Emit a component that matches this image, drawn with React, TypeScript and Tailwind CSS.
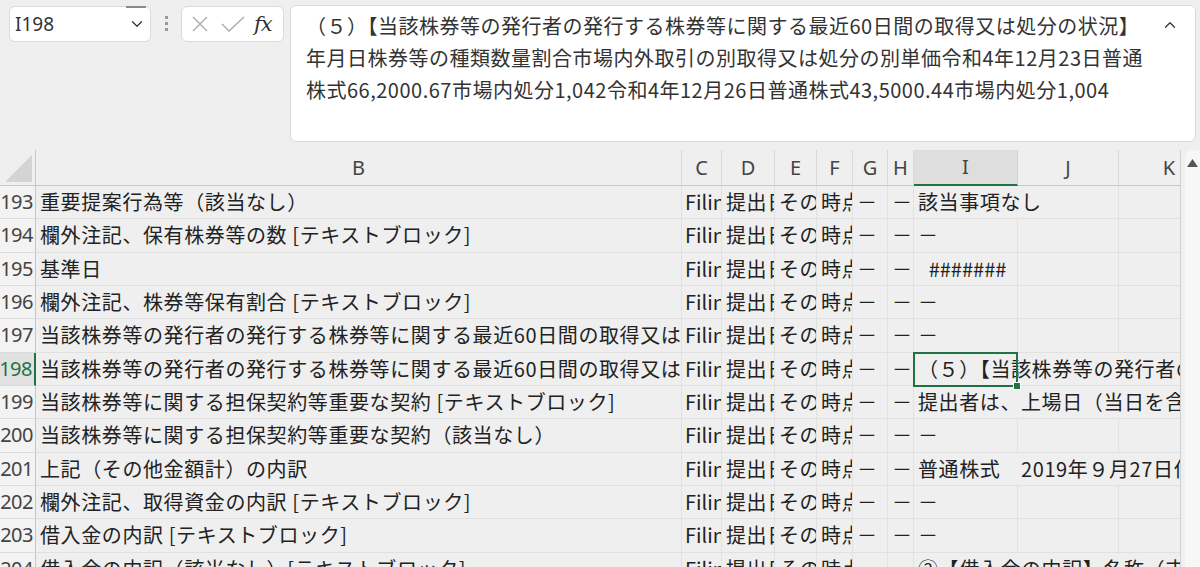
import { ChevronDown, ChevronUp } from 'lucide-react';

type Row = {
  n: number;
  b: string;
  i: string;
  span?: 1 | 2 | 3;
  hash?: boolean;
  selected?: boolean;
};

const rows: Row[] = [
  { n: 193, b: '重要提案行為等（該当なし）', i: '該当事項なし', span: 2 },
  { n: 194, b: '欄外注記、保有株券等の数 [テキストブロック]', i: '－' },
  { n: 195, b: '基準日', i: '#######', hash: true },
  { n: 196, b: '欄外注記、株券等保有割合 [テキストブロック]', i: '－' },
  { n: 197, b: '当該株券等の発行者の発行する株券等に関する最近60日間の取得又は処分の状況 [テキストブロック]', i: '－' },
  {
    n: 198,
    b: '当該株券等の発行者の発行する株券等に関する最近60日間の取得又は処分の状況（該当なし）',
    i: '（５）【当該株券等の発行者の発行する株券等に関する最近60日間の取得又は処分の状況】',
    span: 3,
    selected: true,
  },
  { n: 199, b: '当該株券等に関する担保契約等重要な契約 [テキストブロック]', i: '提出者は、上場日（当日を含む。）から', span: 3 },
  { n: 200, b: '当該株券等に関する担保契約等重要な契約（該当なし）', i: '－' },
  { n: 201, b: '上記（その他金額計）の内訳', i: '普通株式　2019年９月27日付で', span: 3 },
  { n: 202, b: '欄外注記、取得資金の内訳 [テキストブロック]', i: '－' },
  { n: 203, b: '借入金の内訳 [テキストブロック]', i: '－' },
  { n: 204, b: '借入金の内訳（該当なし）[テキストブロック]', i: '②【借入金の内訳】名称（支店名）', span: 3 },
];

const cols = ['B', 'C', 'D', 'E', 'F', 'G', 'H', 'I', 'J', 'K'];

// 普通のセル
const cell = 'h-[33.33px] flex items-center overflow-hidden whitespace-nowrap pl-1 border-r border-b border-[#e1e1e1] tracking-[0.6px]';

function SheetRow({ row }: { row: Row }) {
  const span = row.span ?? 1;
  return (
    <>
      <div
        className={
          row.selected
            ? 'h-[33.33px] flex items-center justify-end pr-[2px] bg-[#e1e1e1] text-[#217346] border-b border-[#dcdcdc] border-r-2 border-r-[#217346]'
            : 'h-[33.33px] flex items-center justify-end pr-[2px] bg-[#f3f3f3] text-[#444] border-b border-[#dcdcdc] border-r border-r-[#c6c6c6]'
        }
      >
        <span className="font-['Noto_Sans',sans-serif] text-[20px] tracking-[-0.5px]">{row.n}</span>
      </div>
      <div className={cell}>{row.b}</div>
      <div className={cell + ' tracking-normal pl-[3px]'}>Filing</div>
      <div className={cell}>提出日</div>
      <div className={cell}>その他</div>
      <div className={cell}>時点</div>
      <div className={cell}>－</div>
      <div className={cell}>－</div>
      <div
        className={
          (span === 3 ? 'col-span-3 ' : span === 2 ? 'col-span-2 ' : '') +
          (row.hash ? cell + ' justify-center pl-0 tracking-normal' : cell) +
          (row.selected ? ' relative overflow-visible' : '')
        }
      >
        <span className="overflow-hidden">{row.i}</span>
        {row.selected && (
          <div className="absolute left-[-1px] top-[-1px] w-[105px] h-[35px] border-2 border-[#217346]">
            <div className="absolute right-[-5px] bottom-[-5px] w-[8px] h-[8px] bg-[#217346] border border-white" />
          </div>
        )}
      </div>
      {span === 1 && <div className={cell} />}
      {span !== 3 && <div className={cell} />}
    </>
  );
}

export default function App() {
  return (
    <div className="w-[1200px] h-[567px] overflow-hidden bg-[#efefef] font-['Noto_Sans_CJK_JP',sans-serif] text-[20px] text-[#222]">
      {/* 数式バー */}
      <div className="h-[150px] flex items-start pt-[5px]">
        <div className="ml-[9px] mt-[1px] w-[142px] h-[36px] relative rounded-md bg-white border border-[#dadada] flex items-center pl-[5px] pr-[4px]">
          <div className="absolute top-[-1px] right-[4px] w-[20px] h-[2px] bg-[#8a8a8a]" />
          <span className="flex-1 font-['Noto_Sans',sans-serif] text-[19px] text-[#333]">I198</span>
          <ChevronDown size={18} strokeWidth={1.6} className="text-[#333]" />
        </div>
        <div className="w-[30px] h-[37px] flex flex-col items-center justify-center gap-[3px]">
          <div className="w-[3px] h-[3px] bg-[#999]" />
          <div className="w-[3px] h-[3px] bg-[#999]" />
          <div className="w-[3px] h-[3px] bg-[#999]" />
        </div>
        <div className="mt-[1px] w-[103px] h-[36px] rounded-md bg-white border border-[#dadada] flex items-center pl-[9px] gap-[12px]">
          <svg width="18" height="18" viewBox="0 0 18 18" className="text-[#a8a8a8]">
            <path d="M2 2 L16 16 M16 2 L2 16" stroke="currentColor" strokeWidth="1.3" fill="none" />
          </svg>
          <svg width="24" height="18" viewBox="0 0 24 18" className="text-[#a8a8a8]">
            <path d="M1 9 L8 16 L23 2" stroke="currentColor" strokeWidth="1.3" fill="none" />
          </svg>
          <span className="font-['DejaVu_Serif',serif] italic text-[21px] leading-none text-[#333] ml-[-3px] tracking-[-1px]">fx</span>
        </div>
        <div className="ml-[6px] w-[906px] h-[137px] rounded-md bg-white border border-[#dadada] flex pl-[15px] pt-[4px] pr-[16px]">
          <div className="flex-1 leading-[32px] text-[#333] tracking-[0.5px]">
            <div className="whitespace-nowrap">（５）【当該株券等の発行者の発行する株券等に関する最近60日間の取得又は処分の状況】</div>
            <div className="whitespace-nowrap">年月日株券等の種類数量割合市場内外取引の別取得又は処分の別単価令和4年12月23日普通</div>
            <div className="whitespace-nowrap">株式66,2000.67市場内処分1,042令和4年12月26日普通株式43,5000.44市場内処分1,004</div>
          </div>
          <ChevronUp size={18} strokeWidth={1.6} className="text-[#333] mt-[6px]" />
        </div>
      </div>

      {/* シート */}
      <div className="flex">
        <div className="w-[1180px] overflow-hidden">
          <div className="grid grid-cols-[36px_646px_40px_53px_42px_36px_35px_26px_104px_101px_101px] w-[1221px]">
            <div className="h-[36px] flex items-end justify-end pr-[3px] pb-[3px] border-r border-b border-[#c8c8c8]">
              <svg width="27" height="27" viewBox="0 0 27 27">
                <polygon points="27,0 27,27 0,27" fill="#d4d4d4" />
              </svg>
            </div>
            {cols.map((c) => (
              <div
                key={c}
                className={
                  c === 'I'
                    ? 'h-[36px] flex items-center justify-center bg-[#dedede] border-r border-[#d4d4d4] border-b-2 border-b-[#217346] text-[#444]'
                    : 'h-[36px] flex items-center justify-center border-r border-[#d9d9d9] border-b border-b-[#c8c8c8] text-[#444]'
                }
              >
                <span className="font-['Noto_Sans',sans-serif] text-[20px]">{c}</span>
              </div>
            ))}
            {rows.map((r) => (
              <SheetRow key={r.n} row={r} />
            ))}
          </div>
        </div>
        <div className="w-[20px] bg-[#f0f0f0] border-l border-[#d0d0d0] pl-[4px]">
          <div className="h-full rounded-tl-lg bg-[#f7f7f7] flex justify-center pt-[9px]">
            <svg width="11" height="8" viewBox="0 0 11 8">
              <polygon points="5.5,0 11,8 0,8" fill="#555" />
            </svg>
          </div>
        </div>
      </div>
    </div>
  );
}
